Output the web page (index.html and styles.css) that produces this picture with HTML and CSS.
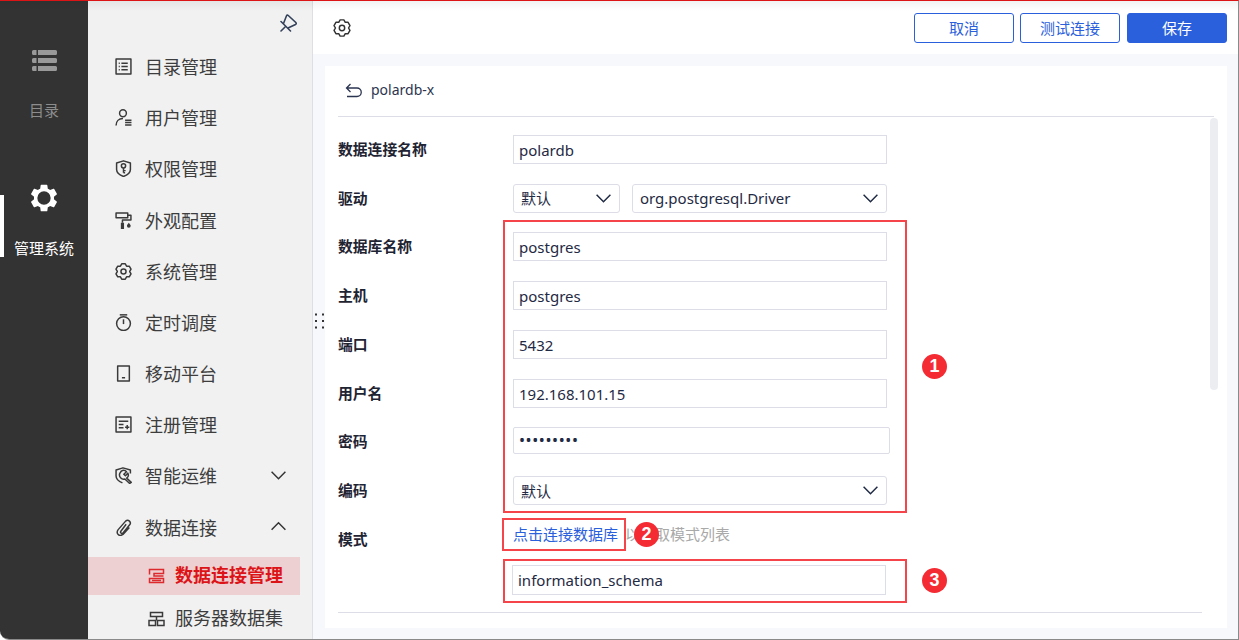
FILE: index.html
```html
<!DOCTYPE html>
<html lang="zh-CN">
<head>
<meta charset="utf-8">
<title>数据连接管理</title>
<link rel="stylesheet" href="styles.css">
</head>
<body>
<svg class="defs" width="0" height="0" aria-hidden="true">
  <symbol id="i-gear" viewBox="0 0 16 16">
    <path d="M6.34 .79L9.66 .79L10.9 2.98L13.41 2.95L15.08 5.84L13.8 8L15.08 10.16L13.41 13.05L10.9 13.02L9.66 15.21L6.34 15.21L5.1 13.02L2.59 13.05L.92 10.16L2.2 8L.92 5.84L2.59 2.95L5.1 2.98Z"/>
    <circle cx="8" cy="8" r="2.4"/>
  </symbol>
  <symbol id="i-down" viewBox="0 0 16 16"><path d="M1.5 4.5L8 11L14.5 4.5"/></symbol>
  <symbol id="i-up" viewBox="0 0 16 16"><path d="M1.5 11L8 4.5L14.5 11"/></symbol>
  <symbol id="i-server" viewBox="0 0 17 16">
    <path d="M1.5 6.500V1.500H15.500V5.500H6V8H15.500"/>
    <path d="M1.5 10.500H15.500V14.500H1.5Z"/>
    <path d="M4 12.500H13"/>
  </symbol>
  <symbol id="i-servers" viewBox="0 0 17 16">
    <path d="M2.500 1.500H14.500V5.500H2.500Z"/>
    <path d="M8.500 5.500V9.500"/>
    <path d="M1 9.500H7.500V14.500H1Z"/>
    <path d="M9.500 9.500H16V14.500H9.500Z"/>
  </symbol>
</svg>
<div class="window">
  <aside class="rail">
    <div class="rail-item">
      <svg class="rail-list" viewBox="0 0 25 21"><path d="M0 1.5a1.5 1.5 0 0 1 1.5-1.500h3v5h-3a1.500 1.500 0 0 1-1.500-1.500zM6 0h17.500a1.500 1.500 0 0 1 1.500 1.500v2a1.500 1.500 0 0 1-1.500 1.500H6zM0 9.500a1.500 1.500 0 0 1 1.500-1.500h3v5h-3a1.500 1.500 0 0 1-1.500-1.500zM6 8h17.500a1.500 1.500 0 0 1 1.500 1.500v2a1.500 1.500 0 0 1-1.500 1.500H6zM0 17.500a1.500 1.500 0 0 1 1.500-1.500h3v5h-3a1.500 1.500 0 0 1-1.500-1.500zM6 16h17.500a1.500 1.500 0 0 1 1.500 1.500v2a1.500 1.500 0 0 1-1.500 1.500H6z"/></svg>
      <span class="rail-label">目录</span>
    </div>
    <div class="rail-item rail-active">
      <svg class="rail-gear" viewBox="0 0 24 24"><path fill-rule="evenodd" d="M12 17A5 5 0 0 1 7 12 5 5 0 0 1 12 7a5 5 0 0 1 5 5 5 5 0 0 1-5 5m7.430-4.030c.04-.32.07-.64.07-.97 0-.33-.03-.66-.07-1l2.110-1.630c.19-.15.24-.42.12-.64l-2-3.460c-.12-.22-.39-.31-.61-.22l-2.490 1c-.52-.39-1.060-.73-1.690-.98l-.37-2.650A.506.506 0 0 0 14 2h-4c-.25 0-.46.18-.5.42l-.37 2.650c-.63.25-1.170.59-1.690.98l-2.490-1c-.22-.09-.49 0-.61.22l-2 3.460c-.13.22-.07.49.12.64L4.570 11c-.04.34-.07.67-.07 1 0 .33.03.65.07.97l-2.110 1.660c-.19.15-.25.42-.12.64l2 3.460c.12.22.39.3.61.22l2.490-1.010c.52.4 1.060.74 1.690.99l.37 2.650c.04.24.25.42.5.42h4c.25 0 .46-.18.5-.42l.37-2.650c.63-.26 1.170-.59 1.690-.99l2.490 1.010c.22.08.49 0 .61-.22l2-3.460c.12-.22.07-.49-.12-.64l-2.110-1.660z"/></svg>
      <span class="rail-label">管理系统</span>
    </div>
  </aside>

  <nav class="menu">
    <div class="menu-top">
      <svg class="pin" viewBox="0 0 18 18"><path d="M1 7.500L10.500 17M3.500 9.500L6.500 1.800Q7.200 .6 8.300 1.500L15.800 8.500Q16.800 9.800 15.500 10.500L8 14M1 17L4.800 13.200"/></svg>
    </div>
    <div class="menu-item">
      <svg class="mi" viewBox="0 0 16 16"><path d="M1 1H15V15H1Z"/><path d="M6 5H12M6 8H12M6 11H12M3.500 5H4.500M3.500 8H4.500M3.500 11H4.500"/></svg>
      <span>目录管理</span>
    </div>
    <div class="menu-item">
      <svg class="mi" viewBox="0 0 16 16"><circle cx="7.500" cy="4" r="3.200"/><path d="M1 15.500C1 11.500 3.500 9 7.500 9"/><path d="M9.500 10.500H15.500M9.500 12.800H15.500M9.500 15H15.500"/></svg>
      <span>用户管理</span>
    </div>
    <div class="menu-item">
      <svg class="mi" viewBox="0 0 16 16"><path d="M8 .8L14.500 2.800V9C14.500 12 11.500 14.200 8 15.500C4.500 14.200 1.500 12 1.500 9V2.800Z"/><circle cx="8" cy="5.500" r="2"/><path d="M8 7.500V12M8 10H10M8 12H9.500"/></svg>
      <span>权限管理</span>
    </div>
    <div class="menu-item">
      <svg class="mi" viewBox="0 0 16 16"><path d="M1 1H12V5.500H1Z"/><path d="M12 3H15V7.500H7V10"/><path class="mf" d="M5.500 10H8.500V16H5.500Z"/><path class="mf" d="M13 10C14 11.500 14.800 12 14.800 13A1.800 1.800 0 0 1 11.200 13C11.200 12 12 11.500 13 10Z"/></svg>
      <span>外观配置</span>
    </div>
    <div class="menu-item">
      <svg class="mi" viewBox="0 0 16 16"><use href="#i-gear"/></svg>
      <span>系统管理</span>
    </div>
    <div class="menu-item">
      <svg class="mi" viewBox="0 0 16 16"><path d="M4.500 .8H11.500"/><circle cx="8" cy="9" r="6.500"/><path d="M8 5V9.500"/></svg>
      <span>定时调度</span>
    </div>
    <div class="menu-item">
      <svg class="mi" viewBox="0 0 16 16"><path d="M2.500 1H13.500V15H2.500Z"/><path d="M6.500 12H9.500"/></svg>
      <span>移动平台</span>
    </div>
    <div class="menu-item">
      <svg class="mi" viewBox="0 0 16 16"><path d="M1 1H15V15H1Z"/><path d="M3.500 5H12.500M3.500 8H8M3.500 11H8M9.500 10.500H13.500M11.500 8.500V12.500"/></svg>
      <span>注册管理</span>
    </div>
    <div class="menu-item">
      <svg class="mi" viewBox="0 0 16 16"><path d="M14.500 6V2.800L7.500 .8L1 2.800V8.500C1 11.500 3.500 13.500 7 15"/><path d="M6 3.800A3.600 3.600 0 0 1 10.800 4.500L8.300 6.800L9.800 8.300L12 5.800A3.600 3.600 0 0 1 11 10.500L15.300 14.500L13.800 15.500L9.300 11.300A4 4 0 0 1 4.500 6Z"/></svg>
      <span>智能运维</span>
      <svg class="chev" viewBox="0 0 16 16"><use href="#i-down"/></svg>
    </div>
    <div class="menu-item">
      <svg class="mi" viewBox="0 0 16 16"><path d="M10.500 5L5.500 11.500C4.500 13 6.500 14.300 7.700 13L13.800 5.500C15.800 3 12.500 -.200 10 2L3 10C.5 13.500 4 17 7.500 14.500L13.500 8"/></svg>
      <span>数据连接</span>
      <svg class="chev" viewBox="0 0 16 16"><use href="#i-up"/></svg>
    </div>
    <div class="sub-item sub-active">
      <svg class="si" viewBox="0 0 17 16"><use href="#i-server"/></svg>
      <span>数据连接管理</span>
    </div>
    <div class="sub-item">
      <svg class="si" viewBox="0 0 17 16"><use href="#i-servers"/></svg>
      <span>服务器数据集</span>
    </div>
  </nav>

  <main class="main">
    <header class="topbar">
      <svg class="top-gear" viewBox="0 0 16 16"><use href="#i-gear"/></svg>
      <div class="actions">
        <div class="btn">取消</div>
        <div class="btn">测试连接</div>
        <div class="btn btn-primary">保存</div>
      </div>
    </header>
    <section class="card">
      <div class="card-title">
        <svg class="back" viewBox="0 0 17 15"><path d="M5.500 1L1.500 5L5.500 9M1.500 5H12A4 4 0 0 1 12 13.500H2"/></svg>
        <span>polardb-x</span>
      </div>
      <div class="form-wrap">
        <div class="thumb"></div>
        <div class="form">
          <div class="row">
            <div class="label">数据连接名称</div>
            <div class="field f-wide">polardb</div>
          </div>
          <div class="row">
            <div class="label">驱动</div>
            <div class="controls">
              <div class="field f-select f-short"><span>默认</span><svg class="sel" viewBox="0 0 16 16"><use href="#i-down"/></svg></div>
              <div class="field f-select f-driver"><span>org.postgresql.Driver</span><svg class="sel" viewBox="0 0 16 16"><use href="#i-down"/></svg></div>
            </div>
          </div>
          <div class="row">
            <div class="label">数据库名称</div>
            <div class="field f-wide">postgres</div>
          </div>
          <div class="row">
            <div class="label">主机</div>
            <div class="field f-wide">postgres</div>
          </div>
          <div class="row">
            <div class="label">端口</div>
            <div class="field f-wide">5432</div>
          </div>
          <div class="row">
            <div class="label">用户名</div>
            <div class="field f-wide">192.168.101.15</div>
          </div>
          <div class="row">
            <div class="label">密码</div>
            <div class="field f-pass">•••••••••</div>
          </div>
          <div class="row">
            <div class="label">编码</div>
            <div class="field f-select f-wide"><span>默认</span><svg class="sel" viewBox="0 0 16 16"><use href="#i-down"/></svg></div>
          </div>
          <div class="row row-mode">
            <div class="label">模式</div>
            <div class="mode-text"><span class="link">点击连接数据库</span><span class="hint">以获取模式列表</span></div>
          </div>
          <div class="row row-schema">
            <div class="label"></div>
            <div class="field f-wide f-schema">information_schema</div>
          </div>
        </div>
        <div class="note note-1"></div>
        <div class="note note-2"></div>
        <div class="note note-3"></div>
        <div class="badge badge-1">1</div>
        <div class="badge badge-2">2</div>
        <div class="badge badge-3">3</div>
      </div>
      <div class="card-foot"></div>
    </section>
    <svg class="grip" viewBox="0 0 11 18"><path d="M1 1.500h2v2H1zM8 1.500h2v2H8zM1 8h2v2H1zM8 8h2v2H8zM1 14.500h2v2H1zM8 14.500h2v2H8z"/></svg>
  </main>
</div>
</body>
</html>
```

FILE: styles.css
```css
* { box-sizing: border-box; }
html, body { margin: 0; padding: 0; background: #fff; }
body {
  width: 1239px;
  height: 640px;
  overflow: hidden;
  font-family: "Noto Sans", "Noto Sans CJK SC", sans-serif;
  color: #1f2433;
}
.defs { position: absolute; }
.window {
  position: relative;
  display: flex;
  width: 1239px;
  height: 640px;
  border-top: 1px solid #dc1416;
  border-right: 1px solid #8a8a8a;
  border-bottom: 1px solid #8a8a8a;
  border-bottom-left-radius: 9px;
  overflow: hidden;
}
.window::after {
  content: "";
  position: absolute;
  top: 0;
  left: 0;
  right: 0;
  height: 10px;
  background: linear-gradient(rgba(0, 0, 0, .05), rgba(0, 0, 0, 0));
  pointer-events: none;
}

/* rail */
.rail {
  flex: 0 0 88px;
  background: #333;
  padding-top: 48px;
  display: flex;
  flex-direction: column;
}
.rail-item {
  position: relative;
  display: flex;
  flex-direction: column;
  align-items: center;
  height: 146px;
}
.rail-list { width: 25px; height: 21px; margin-top: 1px; fill: #999; }
.rail-label {
  margin-top: 28px;
  font-size: 15px;
  line-height: 22px;
  color: #8d8d8d;
}
.rail-active { height: 96px; margin-top: 1px; }
.rail-active::before {
  content: "";
  position: absolute;
  left: 0;
  top: -1px;
  width: 4px;
  height: 62px;
  background: #fff;
}
.rail-gear { width: 32px; height: 32px; margin-top: -14px; fill: #fff; }
.rail-active .rail-label { margin-top: 23px; color: #fff; }

/* menu */
.menu {
  flex: 0 0 225px;
  background: #f1f1f1;
  border-right: 1px solid #dfdfe3;
  overflow: hidden;
}
.menu-top {
  display: flex;
  justify-content: flex-end;
  height: 39.4px;
  padding: 13px 14px 0 0;
}
.pin {
  width: 18px;
  height: 18px;
  fill: none;
  stroke: #33415a;
  stroke-width: 1.600;
  stroke-linecap: round;
}
.menu-item {
  display: flex;
  align-items: center;
  height: 51.200px;
  padding: 0 27px;
  font-size: 18px;
  color: #3d3d3d;
}
.mi {
  flex: none;
  width: 17px;
  height: 17px;
  margin: 1px 13.500px 0 -.5px;
  fill: none;
  stroke: #3a3a3a;
  stroke-width: 1.400;
  stroke-linejoin: round;
}
.mf { fill: #3a3a3a; stroke: none; }
.chev {
  width: 17px;
  height: 17px;
  margin: 0 -1.500px 0 auto;
  fill: none;
  stroke: #333;
  stroke-width: 1.400;
}
.sub-item {
  display: flex;
  align-items: center;
  width: 212px;
  height: 38px;
  margin-top: 4.600px;
  padding: 0 0 3px 60px;
  font-size: 18px;
  color: #3d3d3d;
}
.sub-item + .sub-item { margin-top: 5px; }
.si {
  flex: none;
  width: 17px;
  height: 16px;
  margin: 3px 10px 0 0;
  fill: none;
  stroke: #3a3a3a;
  stroke-width: 1.500;
}
.sub-active {
  background: #ecd0d2;
  color: #dc1418;
  font-weight: 700;
}
.sub-active .si { stroke: #dc2a2e; }

/* main */
.main {
  position: relative;
  flex: 1;
  min-width: 0;
  background: #f7f8fc;
  display: flex;
  flex-direction: column;
}
.topbar {
  flex: none;
  height: 53px;
  background: #fff;
  display: flex;
  align-items: center;
  padding: 0 11px 0 20px;
}
.top-gear {
  width: 18px;
  height: 18px;
  fill: none;
  stroke: #333;
  stroke-width: 1.300;
  stroke-linejoin: round;
}
.actions { display: flex; gap: 6px; margin-left: auto; margin-top: 1px; }
.btn {
  width: 100px;
  height: 30px;
  border: 1px solid #2b60dd;
  border-radius: 3px;
  background: #fff;
  color: #2b60dd;
  font-size: 15px;
  line-height: 28px;
  text-align: center;
}
.btn-primary {
  margin-left: 1px;
  background: #2b60dd;
  color: #fff;
}
.card {
  flex: none;
  width: 902px;
  height: 562px;
  margin: 12px 0 0 12px;
  background: #fff;
  padding: 0 13px;
  display: flex;
  flex-direction: column;
}
.card-title {
  flex: none;
  display: flex;
  align-items: center;
  width: 876px;
  height: 51px;
  padding: 0 0 3px 7px;
  border-bottom: 1px solid #dcdde6;
  font-size: 14px;
  color: #2c3550;
}
.back {
  width: 17px;
  height: 15px;
  margin: 2px 9px 0 0;
  fill: none;
  stroke: #2c3550;
  stroke-width: 1.300;
}
.form-wrap { position: relative; flex: none; height: 495px; }
.thumb {
  position: absolute;
  left: 872px;
  top: 1px;
  width: 8px;
  height: 272px;
  border-radius: 4px;
  background: #ecedf1;
}
.form { padding-top: 18px; }
.row {
  display: flex;
  align-items: flex-start;
  height: 48.720px;
}
.label {
  flex: 0 0 175px;
  height: 29px;
  font-size: 14.800px;
  font-weight: 700;
  line-height: 28px;
  color: #1f2433;
}
.field {
  height: 29px;
  padding: 0 5px;
  border: 1px solid #dcdde6;
  font-size: 15px;
  line-height: 28px;
  color: #1f2a44;
  background: #fff;
}
.f-wide { width: 374px; }
.f-pass {
  width: 377px;
  height: 27px;
  border-radius: 2px;
  font-size: 16px;
  line-height: 25px;
  letter-spacing: .6px;
}
.controls { display: flex; gap: 12px; }
.f-select {
  display: flex;
  align-items: center;
  justify-content: space-between;
  padding: 0 7px 0 7px;
  border-radius: 3px;
}
.f-short { width: 107px; }
.f-driver { width: 255px; }
.sel {
  width: 17px;
  height: 17px;
  fill: none;
  stroke: #1f2a44;
  stroke-width: 1.400;
}
.row-mode { height: 40px; }
.mode-text { font-size: 15px; line-height: 21px; margin-top: -1px; }
.link { color: #2b60dd; }
.hint { margin-left: 7px; color: #a9a9a9; }
.row-schema .field { margin-left: -1px; height: 30px; line-height: 28px; }
.note {
  position: absolute;
  border: 2px solid #f5444a;
}
.note-1 { left: 165px; top: 103px; width: 404px; height: 293px; }
.note-2 { left: 164px; top: 401px; width: 124px; height: 33px; }
.note-3 { left: 165px; top: 442px; width: 404px; height: 44px; }
.badge {
  position: absolute;
  width: 25px;
  height: 25px;
  border-radius: 50%;
  background: #f52b33;
  color: #fff;
  font-family: "Liberation Sans", sans-serif;
  font-size: 18px;
  font-weight: 700;
  line-height: 25px;
  text-align: center;
}
.badge-1 { left: 584px; top: 237px; }
.badge-2 { left: 296px; top: 405px; }
.badge-3 { left: 584px; top: 451px; }
.card-foot {
  flex: none;
  width: 864px;
  border-top: 1px solid #dcdde6;
}
.grip {
  position: absolute;
  left: 1px;
  top: 311px;
  width: 11px;
  height: 18px;
  fill: #333;
}
```
